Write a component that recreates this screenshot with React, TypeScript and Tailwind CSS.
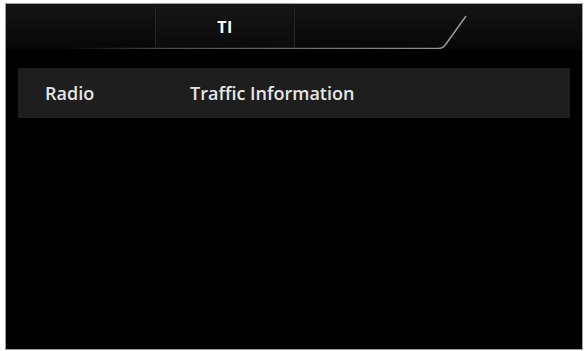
export default function App() {
  return (
    <div className="w-[584px] h-[351px] bg-white pl-[5px] pt-[3px] pr-[1px] pb-[1px]" style={{ fontFamily: '"Open Sans", sans-serif' }}>
      <div className="w-[578px] h-[347px] border border-[#a0a0a0] bg-black flex flex-col">
        {/* header */}
        <div className="relative h-[45px] bg-gradient-to-b from-[#141414] to-[#070707] flex items-end">
          <div className="ml-[149px] w-[140px] h-[40px] mb-[2px] border-x border-[#262626] bg-gradient-to-b from-[#161616] to-[#0b0b0b] flex items-center justify-center">
            <span className="text-white text-[16px] font-bold tracking-wide">TI</span>
          </div>
          <svg className="absolute left-0 top-0" width="578" height="45" viewBox="0 0 578 45">
            <defs>
              <linearGradient id="ln" x1="0" x2="1" y1="0" y2="0">
                <stop offset="0" stopColor="#555" stopOpacity="0" />
                <stop offset="0.25" stopColor="#6a6a6a" stopOpacity="0.7" />
                <stop offset="1" stopColor="#9a9a9a" />
              </linearGradient>
            </defs>
            <path d="M60 44.5 H432 Q437 44.5 440 40 L460 12" fill="none" stroke="url(#ln)" strokeWidth="1.5" />
          </svg>
        </div>
        <div className="pt-[19px] px-[12px]">
          <div className="h-[50px] bg-[#1e1e1e] flex items-center text-[#e6e6e6] text-[18px] font-semibold">
            <span className="ml-[27px] w-[145px]">Radio</span>
            <span>Traffic Information</span>
          </div>
        </div>
      </div>
    </div>
  )
}
